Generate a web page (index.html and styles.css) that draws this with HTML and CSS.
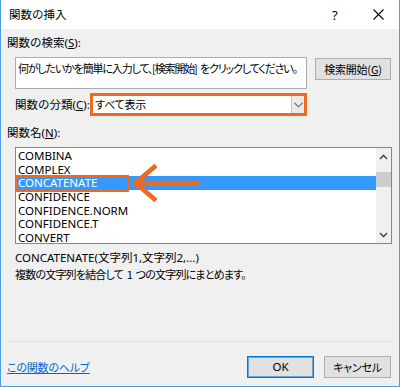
FILE: index.html
```html
<!DOCTYPE html>
<html lang="ja">
<head>
<meta charset="utf-8">
<title>関数の挿入</title>
<link rel="stylesheet" href="styles.css">
</head>
<body>
<div class="window">
  <div class="titlebar">
    <span class="title">関数の挿入</span>
    <span class="help">?</span>
    <span class="close">
      <svg width="11" height="11" viewBox="0 0 11 11"><path d="M0.5 0.5 L10.5 10.5 M10.5 0.5 L0.5 10.5" stroke="#000" stroke-width="1.1" fill="none"/></svg>
    </span>
  </div>
  <div class="body">
    <div class="label">関数の検索(<u>S</u>):</div>
    <div class="search-row">
      <div class="search-box jp tighter">何がしたいかを簡単に入力して、[検索開始] をクリックしてください。</div>
      <div class="btn btn-search jp">検索開始(<u>G</u>)</div>
    </div>
    <div class="cat-row">
      <span class="cat-label">関数の分類(<u>C</u>):</span>
      <div class="select">
        <span class="select-text jp">すべて表示</span>
        <span class="select-arrow"><svg width="9" height="6" viewBox="0 0 9 6"><path d="M0.5 0.8 L4.5 4.8 L8.5 0.8" stroke="#606060" stroke-width="1.1" fill="none"/></svg></span>
      </div>
    </div>
    <div class="label label-name">関数名(<u>N</u>):</div>
    <div class="listbox">
      <ul class="items">
        <li>COMBINA</li>
        <li>COMPLEX</li>
        <li class="selected">CONCATENATE</li>
        <li>CONFIDENCE</li>
        <li>CONFIDENCE.NORM</li>
        <li>CONFIDENCE.T</li>
        <li>CONVERT</li>
      </ul>
      <div class="scrollbar">
        <span class="sb-arrow"><svg width="9" height="6" viewBox="0 0 9 6"><path d="M1 5 L4.5 1.5 L8 5" stroke="#505050" stroke-width="1.6" fill="none"/></svg></span>
        <span class="sb-track"><span class="sb-thumb"></span></span>
        <span class="sb-arrow"><svg width="9" height="6" viewBox="0 0 9 6"><path d="M1 1 L4.5 4.5 L8 1" stroke="#505050" stroke-width="1.6" fill="none"/></svg></span>
      </div>
      <div class="highlight"></div>
      <svg class="pointer" width="200" height="60" viewBox="0 0 200 60">
        <rect x="119" y="33.8" width="66" height="4.4" fill="#ef6a1e"/>
        <polyline points="141,18.5 120.5,36 141,53.5" fill="none" stroke="#ef6a1e" stroke-width="4.8" stroke-linejoin="miter" stroke-miterlimit="10"/>
      </svg>
    </div>
    <div class="desc">
      <div>CONCATENATE(文字列1,文字列2,...)</div>
      <div class="jp tight">複数の文字列を結合して 1 つの文字列にまとめます。</div>
    </div>
    <div class="spacer"></div>
    <div class="footer">
      <a class="help-link jp" href="#">この関数のヘルプ</a>
      <div class="btn btn-ok">OK</div>
      <div class="btn btn-cancel jp">キャンセル</div>
    </div>
  </div>
</div>
</body>
</html>
```

FILE: styles.css
```css
* { box-sizing: border-box; }
html, body { margin: 0; padding: 0; }
body {
  font-family: "Noto Sans", "Noto Sans CJK JP", sans-serif;
  font-size: 11.5px;
  color: #000;
  background: #fff;
}
.jp {
  font-family: "Noto Sans CJK JP", sans-serif;
  font-size: 11px;
  font-feature-settings: "palt" 1;
  letter-spacing: -0.2px;
}
.jp.tight { letter-spacing: -0.8px; word-spacing: 2px; }
.jp.tighter { letter-spacing: -1.15px; word-spacing: 2px; }
u { text-decoration: underline; text-underline-offset: 1px; }
.window {
  width: 400px;
  height: 387px;
  border: 1px solid #4c9fe6;
  border-top: none;
  display: flex;
  flex-direction: column;
  background: #f0f0f0;
}
.titlebar {
  height: 29px;
  background: #fff;
  display: flex;
  align-items: center;
  padding-left: 8px;
  flex: none;
}
.title { flex: 1; font-size: 11.5px; line-height: 14px; }
.help { width: 10px; font-size: 13px; line-height: 14px; margin-right: 31px; }
.close { width: 11px; height: 11px; margin-right: 15px; display: flex; margin-top: -1px; }
.body {
  flex: 1;
  display: flex;
  flex-direction: column;
  padding: 7px 7px 0 6px;
}
.label { line-height: 14px; height: 14px; }
.search-row {
  display: flex;
  margin: 7px 1px 0 8px;
  align-items: flex-start;
}
.search-box {
  width: 292px;
  height: 32px;
  background: #fff;
  border: 1px solid #abadb3;
  padding: 3px 2px;
  line-height: 14px;
  white-space: nowrap;
  overflow: hidden;
}
.btn {
  background: #e1e1e1;
  border: 1px solid #adadad;
  display: flex;
  align-items: center;
  justify-content: center;
  line-height: 14px;
  white-space: nowrap;
}
.btn-search { width: 76px; height: 22px; margin-left: 8px; margin-top: 1px; }
.cat-row {
  display: flex;
  align-items: center;
  margin: 4px 0 0 8px;
}
.cat-label { width: 75px; line-height: 14px; }
.select {
  width: 217px;
  height: 23px;
  border: 3px solid #ef6a1e;
  background: #fff;
  display: flex;
  align-items: stretch;
}
.select-text { flex: 1; padding-left: 2px; line-height: 17px; }
.select-arrow {
  width: 13px;
  border-left: 1px solid #c8c8c8;
  background: #eaeaea;
  display: flex;
  align-items: center;
  justify-content: center;
}
.label-name { margin-top: 10px; }
.listbox {
  position: relative;
  margin: 7px 0 0 8px;
  height: 97px;
  border: 1px solid #828790;
  background: #fff;
  display: flex;
}
.items {
  list-style: none;
  margin: 0;
  padding: 1px 0 0 1px;
  flex: 1;
}
.items li {
  height: 13.67px;
  line-height: 13.67px;
  padding-left: 1px;
  white-space: nowrap;
}
.items li.selected { background: #3399ff; color: #fff; }
.scrollbar {
  width: 15px;
  background: #f0f0f0;
  display: flex;
  flex-direction: column;
}
.sb-arrow { height: 17px; display: flex; align-items: center; justify-content: center; }
.sb-track { flex: 1; position: relative; }
.sb-thumb { display: block; margin-top: 7px; height: 15px; background: #cdcdcd; }
.highlight {
  position: absolute;
  left: -1px;
  top: 27px;
  width: 114px;
  height: 17px;
  border: 2.5px solid #ef6a1e;
}
.pointer {
  position: absolute;
  left: -1px;
  top: -1px;
  overflow: visible;
}
.desc {
  margin: 6px 0 0 8px;
  line-height: 16px;
}
.spacer { flex: 1; }
.footer {
  border-top: 1px solid #dfdfdf;
  height: 45px;
  display: flex;
  align-items: flex-start;
  padding-top: 14px;
  padding-right: 1px;
}
.help-link {
  color: #0066cc;
  text-decoration: underline;
  line-height: 14px;
  margin-top: 4px;
  flex: 1;
}
.btn-ok {
  width: 67px;
  height: 22px;
  border: 1px solid #0078d7;
  box-shadow: inset 0 0 0 1px rgba(0, 120, 215, 0.55);
}
.btn-cancel {
  width: 67px;
  height: 22px;
  margin-left: 10px;
}
```
